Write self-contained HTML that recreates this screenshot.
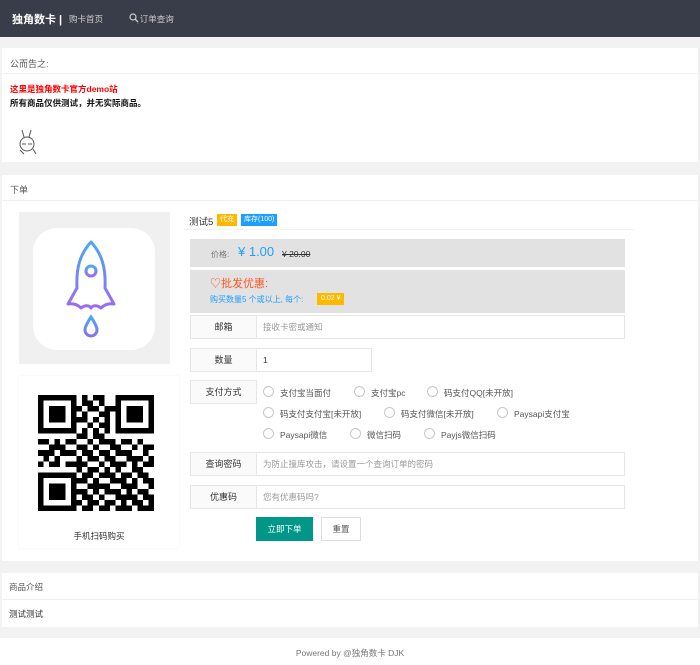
<!DOCTYPE html>
<html><head><meta charset="utf-8"><style>
*{margin:0;padding:0;box-sizing:border-box}
body{width:700px;height:665px;background:#f2f2f2;font-family:"Liberation Sans","Noto Sans CJK SC",sans-serif;font-size:9px;color:#333;position:relative;overflow:hidden}
.a{position:absolute}
.nav{left:0;top:0;width:700px;height:37px;background:#393d49}
.card{background:#fff;left:2px;width:696px}
.hd{font-size:9px;color:#555}
.line{height:1px;background:#f0f0f0;left:2px;width:696px}
.lab{background:#fafafa;border:1px solid #e6e6e6;text-align:center;font-size:9px;color:#333;line-height:22px}
.inp{border:1px solid #e6e6e6;background:#fff;font-size:8.5px;color:#999;line-height:22px;padding-left:6px}
.rd{width:11px;height:11px;border:1px solid #c8c8c8;border-radius:50%;background:#fff}
.rt{font-size:8.5px;color:#555}
</style></head><body>
<div class="a nav"></div>
<div class="a" style="left:12px;top:11px;color:#fff;font-size:11px;font-weight:bold">独角数卡 |</div>
<div class="a" style="left:69px;top:13px;color:#ccc;font-size:8.5px">购卡首页</div>
<div class="a" style="left:129px;top:13px;color:#ccc;font-size:8.5px">&#x1F50D;&#xFE0E;订单查询</div>
<div class="a" style="left:129px;top:13px;width:10px;height:10px;background:#393d49"></div>
<svg class="a" style="left:129px;top:13px" width="10" height="10"><circle cx="4" cy="4" r="3" stroke="#ccc" fill="none" stroke-width="1.2"/><path d="M6 6L9 9" stroke="#ccc" stroke-width="1.3"/></svg>

<div class="a card" style="top:48px;height:114px"></div>
<div class="a hd" style="left:10px;top:57px">公而告之:</div>
<div class="a line" style="top:73px"></div>
<div class="a" style="left:10px;top:83px;color:#f00;font-weight:bold;font-size:8.5px">这里是独角数卡官方demo站</div>
<div class="a" style="left:10px;top:97px;color:#111;font-weight:bold;font-size:8.5px">所有商品仅供测试，并无实际商品。</div>
<svg class="a" style="left:15px;top:127px" width="26" height="30"><g fill="none" stroke="#555" stroke-width="1"><circle cx="12" cy="17" r="7"/><path d="M9 10L7 3M14 10L16 3M7 17h4M13 17h4M5 23l4 4M18 22l3 5"/></g></svg>

<div class="a card" style="top:175px;height:386px"></div>
<div class="a hd" style="left:10px;top:183px">下单</div>
<div class="a line" style="top:200px"></div>

<div class="a" style="left:19px;top:212px;width:151px;height:152px;background:#f0f0f0"></div>
<div class="a" style="left:33px;top:228px;width:122px;height:122px;background:#fff;border-radius:24px"></div>
<svg class="a" style="left:60px;top:238px" width="70" height="102" viewBox="0 0 70 102">
<defs><linearGradient id="g" x1="0" y1="0" x2="0" y2="1"><stop offset="0" stop-color="#4aa8f0"/><stop offset="1" stop-color="#9b6cf0"/></linearGradient>
<linearGradient id="g2" x1="0" y1="0" x2="0" y2="1"><stop offset="0" stop-color="#4aa8f0"/><stop offset="1" stop-color="#8a72ee"/></linearGradient></defs>
<g fill="none" stroke="url(#g)" stroke-width="3" stroke-linejoin="round">
<path d="M31 4C20 16 16 30 17 50L8 66C14 65 18 67 21 70C25 67 29 67 31 70C33 67 37 67 41 70C44 67 48 65 54 66L45 50C46 30 42 16 31 4Z"/>
<circle cx="31" cy="33" r="5"/>
</g>
<path d="M31 79C27 85 25 89 25 92a6 6 0 0 0 12 0C37 89 35 85 31 79Z" fill="none" stroke="url(#g2)" stroke-width="3"/>
</svg>

<div class="a" style="left:19px;top:376px;width:160px;height:172px;background:#fff;box-shadow:0 0 2px #eee"></div>
<svg class="a" style="left:38px;top:395px" width="116" height="116" viewBox="0 0 21 21" shape-rendering="crispEdges">
<g fill="#000">
<rect x="0" y="0" width="7" height="7"/><rect x="14" y="0" width="7" height="7"/><rect x="0" y="14" width="7" height="7"/>
</g>
<g fill="#fff"><rect x="1" y="1" width="5" height="5"/><rect x="15" y="1" width="5" height="5"/><rect x="1" y="15" width="5" height="5"/></g>
<g fill="#000"><rect x="2" y="2" width="3" height="3"/><rect x="16" y="2" width="3" height="3"/><rect x="2" y="16" width="3" height="3"/></g>
<path fill="#000" d="M8 0h1v1h-1zM10 0h2v1h-2zM8 1h2v1h-2zM11 1h1v1h-1zM7 2h1v1h-1zM9 2h2v1h-2zM12 2h2v1h-2zM8 3h1v1h-1zM11 3h2v1h-2zM7 4h2v1h-2zM10 4h1v1h-1zM12 4h1v1h-1zM9 5h1v1h-1zM11 5h2v1h-2zM8 6h1v1h-1zM10 6h1v1h-1zM12 6h1v1h-1zM7 7h2v1h-2zM10 7h2v1h-2z
M0 8h2v1h-2zM3 8h1v1h-1zM5 8h2v1h-2zM9 8h1v1h-1zM11 8h3v1h-3zM15 8h2v1h-2zM18 8h1v1h-1z
M2 9h3v1h-3zM7 9h2v1h-2zM10 9h1v1h-1zM13 9h2v1h-2zM17 9h1v1h-1zM19 9h2v1h-2z
M0 10h3v1h-3zM4 10h3v1h-3zM8 10h2v1h-2zM11 10h2v1h-2zM14 10h3v1h-3zM19 10h1v1h-1z
M1 11h1v1h-1zM3 11h1v1h-1zM7 11h1v1h-1zM9 11h2v1h-2zM12 11h2v1h-2zM16 11h3v1h-3zM20 11h1v1h-1z
M0 12h1v1h-1zM2 12h2v1h-2zM5 12h4v1h-4zM11 12h1v1h-1zM13 12h3v1h-3zM17 12h1v1h-1zM19 12h2v1h-2z
M7 13h1v1h-1zM9 13h2v1h-2zM12 13h1v1h-1zM14 13h1v1h-1zM17 13h2v1h-2z
M8 14h2v1h-2zM11 14h3v1h-3zM15 14h2v1h-2zM18 14h2v1h-2z
M7 15h2v1h-2zM10 15h1v1h-1zM13 15h3v1h-3zM17 15h1v1h-1zM19 15h2v1h-2z
M9 16h4v1h-4zM15 16h3v1h-3zM20 16h1v1h-1z
M7 17h2v1h-2zM10 17h1v1h-1zM12 17h3v1h-3zM16 17h1v1h-1zM18 17h2v1h-2z
M8 18h2v1h-2zM11 18h1v1h-1zM14 18h4v1h-4zM19 18h2v1h-2z
M7 19h1v1h-1zM9 19h2v1h-2zM12 19h2v1h-2zM15 19h1v1h-1zM17 19h2v1h-2zM20 19h1v1h-1z
M8 20h2v1h-2zM11 20h2v1h-2zM14 20h3v1h-3zM18 20h3v1h-3z"/>
</svg>
<div class="a" style="left:19px;top:530px;width:160px;text-align:center;font-size:8.5px;color:#333">手机扫码购买</div>

<div class="a" style="left:189px;top:214px;font-size:9.5px;color:#333">测试5</div>
<div class="a" style="left:217px;top:214px;background:#ffb800;color:#fff;font-size:7px;padding:1px 3px;line-height:10px">代充</div>
<div class="a" style="left:241px;top:214px;background:#1e9fff;color:#fff;font-size:7px;padding:1px 3px;line-height:10px">库存(100)</div>
<div class="a" style="left:184px;top:229px;width:450px;height:1px;background:#f3f3f3"></div>

<div class="a" style="left:190px;top:239px;width:435px;height:28px;background:#e2e2e2"></div>
<div class="a" style="left:211px;top:249px;font-size:8px;color:#777">价格:</div>
<div class="a" style="left:238px;top:244px;font-size:13px;color:#1e9fff">¥ 1.00</div>
<div class="a" style="left:282px;top:249px;font-size:8.5px;color:#333;text-decoration:line-through">¥ 20.00</div>

<div class="a" style="left:190px;top:270px;width:435px;height:43px;background:#e2e2e2"></div>
<div class="a" style="left:210px;top:275px;font-size:11px;color:#ff5722">&#9825;批发优惠:</div>
<div class="a" style="left:210px;top:294px;font-size:8px;color:#1e9fff">购买数量5 个或以上, 每个:</div>
<div class="a" style="left:317px;top:293px;background:#ffb800;color:#fff;font-size:7px;padding:1px 4px;line-height:10px">0.02 ¥</div>

<div class="a lab" style="left:190px;top:315px;width:67px;height:24px">邮箱</div>
<div class="a inp" style="left:256px;top:315px;width:369px;height:24px">接收卡密或通知</div>
<div class="a lab" style="left:190px;top:348px;width:67px;height:24px">数量</div>
<div class="a inp" style="left:256px;top:348px;width:116px;height:24px;color:#333">1</div>
<div class="a lab" style="left:190px;top:380px;width:67px;height:24px">支付方式</div>

<div class="a rd" style="left:263px;top:386px"></div><div class="a rt" style="left:280px;top:387px">支付宝当面付</div>
<div class="a rd" style="left:354px;top:386px"></div><div class="a rt" style="left:371px;top:387px">支付宝pc</div>
<div class="a rd" style="left:427px;top:386px"></div><div class="a rt" style="left:444px;top:387px">码支付QQ[未开放]</div>
<div class="a rd" style="left:263px;top:407px"></div><div class="a rt" style="left:280px;top:408px">码支付支付宝[未开放]</div>
<div class="a rd" style="left:384px;top:407px"></div><div class="a rt" style="left:401px;top:408px">码支付微信[未开放]</div>
<div class="a rd" style="left:497px;top:407px"></div><div class="a rt" style="left:514px;top:408px">Paysapi支付宝</div>
<div class="a rd" style="left:263px;top:428px"></div><div class="a rt" style="left:280px;top:429px">Paysapi微信</div>
<div class="a rd" style="left:350px;top:428px"></div><div class="a rt" style="left:367px;top:429px">微信扫码</div>
<div class="a rd" style="left:424px;top:428px"></div><div class="a rt" style="left:441px;top:429px">Payjs微信扫码</div>

<div class="a lab" style="left:190px;top:452px;width:67px;height:24px">查询密码</div>
<div class="a inp" style="left:256px;top:452px;width:369px;height:24px">为防止撞库攻击，请设置一个查询订单的密码</div>
<div class="a lab" style="left:190px;top:485px;width:67px;height:24px">优惠码</div>
<div class="a inp" style="left:256px;top:485px;width:369px;height:24px">您有优惠码吗?</div>
<div class="a" style="left:256px;top:517px;width:57px;height:24px;background:#009688;color:#fff;font-size:8.5px;text-align:center;line-height:24px">立即下单</div>
<div class="a" style="left:321px;top:517px;width:40px;height:24px;border:1px solid #ddd;background:#fff;color:#555;font-size:8.5px;text-align:center;line-height:22px">重置</div>

<div class="a card" style="top:573px;height:54px"></div>
<div class="a" style="left:9px;top:581px;font-size:8.5px;color:#555">商品介绍</div>
<div class="a line" style="top:599px"></div>
<div class="a" style="left:9px;top:608px;font-size:8.5px;color:#333">测试测试</div>

<div class="a" style="left:0;top:638px;width:700px;height:27px;background:#fff"></div>
<div class="a" style="left:0;top:647px;width:700px;text-align:center;font-size:8.5px;color:#777">Powered by @独角数卡 DJK</div>
</body></html>
